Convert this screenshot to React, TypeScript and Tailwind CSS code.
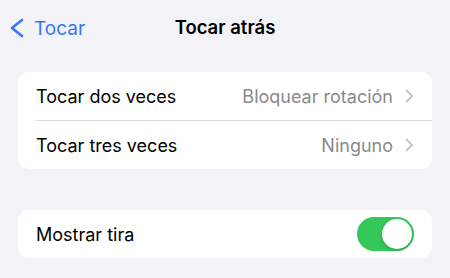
const font = { fontFamily: 'Inter, "Noto Sans", sans-serif' }

function Chevron() {
  return (
    <svg width="9" height="14" viewBox="0 0 9 14" className="ml-[12px] shrink-0">
      <polyline points="1.5,1.5 7,7 1.5,12.5" fill="none" stroke="#c4c4c7" strokeWidth="1.8" strokeLinecap="round" strokeLinejoin="round" />
    </svg>
  )
}

function Row({ label, value }: { label: string; value: string }) {
  return (
    <div className="flex h-[48px] items-center pl-[18px] pr-[18px]">
      <span className="flex-1 text-[18px] text-black">{label}</span>
      <span className="text-[18px] text-[#8a8a8e]">{value}</span>
      <Chevron />
    </div>
  )
}

export default function App() {
  return (
    <div className="h-[278px] w-[450px] bg-[#f2f2f7]" style={font}>
      <div className="relative flex h-[56px] items-center justify-center">
        <div className="absolute left-[9px] top-[18px] flex items-center text-[#3478f6]">
          <svg width="16" height="20" viewBox="0 0 16 20">
            <polyline points="13,2 3,10 13,18" fill="none" stroke="#3478f6" strokeWidth="2.6" strokeLinecap="round" strokeLinejoin="round" />
          </svg>
          <span className="ml-[9px] text-[19px] leading-none">Tocar</span>
        </div>
        <span className="text-[18.5px] font-semibold text-black">Tocar atrás</span>
      </div>

      <div className="mx-[18px] mt-[16px] flex flex-col rounded-[11px] bg-white">
        <Row label="Tocar dos veces" value="Bloquear rotación" />
        <div className="ml-[18px] h-px bg-[#dcdce0]" />
        <Row label="Tocar tres veces" value="Ninguno" />
      </div>

      <div className="mx-[18px] mt-[41px] flex h-[48px] items-center rounded-[11px] bg-white pl-[18px] pr-[18px]">
        <span className="flex-1 text-[18px] text-black">Mostrar tira</span>
        <div className="flex h-[34px] w-[57px] items-center justify-end rounded-full bg-[#34c759] p-[2px]">
          <div className="h-[30px] w-[30px] rounded-full bg-white shadow-[0_2px_4px_rgba(0,0,0,0.15)]" />
        </div>
      </div>
    </div>
  )
}
